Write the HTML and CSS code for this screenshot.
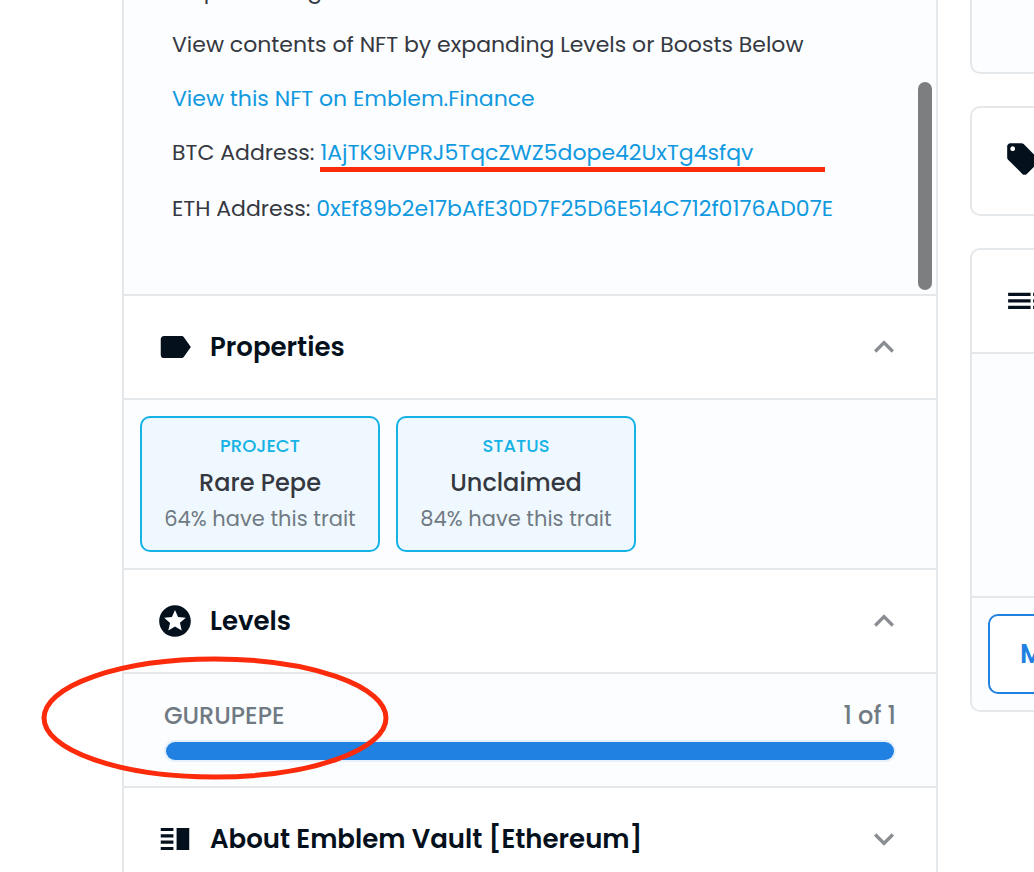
FILE: index.html
```
<!DOCTYPE html>
<html lang="en">
<head>
    <meta charset="utf-8">
    <title>GURUPEPE - Emblem Vault</title>
    <link rel="stylesheet" href="styles.css">
</head>
<body>
    <div class="layout">
        <main class="panel">
            <section class="description">
                <p>To presenting</p>
                <p>View contents of NFT by expanding Levels or Boosts Below</p>
                <p><a href="#">View this NFT on Emblem.Finance</a></p>
                <p>BTC Address: <a class="marked" href="#">1AjTK9iVPRJ5TqcZWZ5dope42UxTg4sfqv</a></p>
                <p class="eth">ETH Address: <a href="#">0xEf89b2e17bAfE30D7F25D6E514C712f0176AD07E</a></p>
                <div class="scroll-thumb"></div>
            </section>

            <section>
                <button class="panel-header" type="button" aria-expanded="true">
                    <svg class="icon" viewBox="0 0 24 24"><path d="M17.63 5.84C17.27 5.33 16.67 5 16 5L5 5.01C3.9 5.01 3 5.9 3 7v10c0 1.1.9 1.99 2 1.99L16 19c.67 0 1.27-.33 1.63-.84L22 12l-4.37-6.16z"/></svg>
                    <span class="title">Properties</span>
                    <svg class="chevron" viewBox="0 0 24 24"><path d="M12 8l-6 6 1.41 1.41L12 10.83l4.59 4.58L18 14z"/></svg>
                </button>
                <div class="panel-body traits">
                    <a class="trait" href="#">
                        <span class="trait-type">PROJECT</span>
                        <span class="trait-value">Rare Pepe</span>
                        <span class="trait-rarity">64% have this trait</span>
                    </a>
                    <a class="trait" href="#">
                        <span class="trait-type">STATUS</span>
                        <span class="trait-value">Unclaimed</span>
                        <span class="trait-rarity">84% have this trait</span>
                    </a>
                </div>
            </section>

            <section>
                <button class="panel-header" type="button" aria-expanded="true">
                    <svg class="icon" viewBox="0 0 24 24"><path d="M11.99 2C6.47 2 2 6.48 2 12s4.47 10 9.99 10C17.52 22 22 17.52 22 12S17.52 2 11.99 2zm4.24 16L12 15.45 7.77 18l1.12-4.81-3.73-3.23 4.92-.42L12 5l1.92 4.53 4.92.42-3.73 3.23L16.23 18z"/></svg>
                    <span class="title">Levels</span>
                    <svg class="chevron" viewBox="0 0 24 24"><path d="M12 8l-6 6 1.41 1.41L12 10.83l4.59 4.58L18 14z"/></svg>
                </button>
                <div class="panel-body levels">
                    <div class="level-text">
                        <span>GURUPEPE</span>
                        <span>1 of 1</span>
                    </div>
                    <div class="level-bar"><div class="level-fill"></div></div>
                    <svg class="circle-mark" viewBox="0 0 348 124"><ellipse cx="174" cy="62" rx="171" ry="59"/></svg>
                </div>
            </section>

            <section>
                <button class="panel-header" type="button" aria-expanded="false">
                    <svg class="icon" viewBox="0 0 24 24"><path d="M3 13h8v2H3zm0 4h8v2H3zm0-8h8v2H3zm0-4h8v2H3zm10 0h8v14h-8z"/></svg>
                    <span class="title">About Emblem Vault [Ethereum]</span>
                    <svg class="chevron" viewBox="0 0 24 24"><path d="M16.59 8.59L12 13.17 7.41 8.59 6 10l6 6 6-6z"/></svg>
                </button>
            </section>
        </main>

        <aside class="sidebar">
            <div class="card price"></div>
            <div class="card listings">
                <svg class="icon" viewBox="0 0 24 24"><path d="M21.41 11.58l-9-9C12.05 2.22 11.55 2 11 2H4c-1.1 0-2 .9-2 2v7c0 .55.22 1.05.59 1.42l9 9c.36.36.86.58 1.41.58.55 0 1.05-.22 1.41-.59l7-7c.37-.36.59-.86.59-1.41 0-.55-.23-1.06-.59-1.42zM5.5 7C4.67 7 4 6.33 4 5.5S4.67 4 5.5 4 7 4.67 7 5.5 6.33 7 5.5 7z"/></svg>
            </div>
            <div class="card offers">
                <div class="offers-header">
                    <svg class="icon" viewBox="0 0 24 24"><path d="M2.600 6.800h14.200v2H2.600zm0 4.100h14.200v2H2.600zm0 4.100h14.200v2H2.600zM18.400 6.800h2v2h-2zm0 4.100h2v2h-2zm0 4.100h2v2h-2z"/></svg>
                </div>
                <div class="offers-body"></div>
                <div class="offers-footer">
                    <button class="offer-button" type="button">Make Offer</button>
                </div>
            </div>
        </aside>
    </div>
</body>
</html>
```
FILE: styles.css
```
* { box-sizing: border-box; }
body { margin: 0; background: #fff; color: #353840; font-family: Poppins, Inter, sans-serif; font-size: 22px; overflow: hidden; }
a { color: #1199e0; text-decoration: none; }
button { font-family: inherit; cursor: pointer; }

.layout { display: grid; grid-template-columns: minmax(0, 1fr) 64px; gap: 32px; padding-left: 122px; align-items: start; }
.panel { border: 2px solid #e5e8eb; border-width: 0 2px; }

/* description */
.description { position: relative; height: 294px; padding: 0 48px 68px; background: #fbfdff; display: flex; flex-direction: column; justify-content: flex-end; gap: 20px; overflow: hidden; white-space: nowrap; }
.description p { margin: 0; line-height: 34px; flex: none; }
.description .eth { margin-top: 2px; }
.marked { position: relative; }
.marked::after { content: ""; position: absolute; left: 0; top: 30px; width: 505px; height: 5px; background: #fb2b0b; }
.scroll-thumb { position: absolute; right: 4px; bottom: 4px; width: 14px; height: 208px; border-radius: 7px; background: #7d7e80; }

/* accordion */
.panel-header { display: flex; align-items: center; width: 100%; height: 104px; padding: 0 32px; border: 0; border-top: 2px solid #e5e8eb; background: #fff; color: #04111d; text-align: left; }
.icon { width: 38px; height: 38px; flex: none; fill: #04111d; }
.title { flex: 1; margin-left: 16px; font-size: 26px; font-weight: 600; }
.chevron { width: 40px; height: 40px; fill: #8a8d91; }
.panel-body { border-top: 2px solid #e5e8eb; background: #fbfdff; }

.traits { display: flex; gap: 16px; padding: 16px; }
.trait { display: flex; flex-direction: column; align-items: center; width: 240px; height: 136px; padding-top: 12px; border: 2px solid #15b2e5; border-radius: 10px; background: #eff8ff; }
.trait-type { color: #15b2e5; font-size: 18px; font-weight: 500; line-height: 32px; }
.trait-value { color: #353840; font-size: 24px; font-weight: 500; line-height: 42px; }
.trait-rarity { color: #707a83; font-size: 21px; line-height: 30px; }

.levels { position: relative; height: 114px; padding: 24px 40px; }
.level-text { display: flex; justify-content: space-between; color: #707a83; font-size: 24px; font-weight: 500; line-height: 36px; }
.level-bar { height: 22px; margin-top: 6px; padding: 2px; border-radius: 11px; background: #e5f0fb; }
.level-fill { height: 18px; border-radius: 9px; background: #2081e2; }
.circle-mark { position: absolute; left: -83px; top: -18px; width: 348px; height: 124px; fill: none; stroke: #fb2b0b; stroke-width: 5; pointer-events: none; }

/* sidebar, runs off the right edge */
.sidebar { display: flex; flex-direction: column; gap: 32px; overflow: hidden; }
.card { width: 560px; border: 2px solid #e5e8eb; border-radius: 10px; background: #fff; overflow: hidden; }
.price { height: 74px; border-top: 0; border-radius: 0 0 10px 10px; background: #fbfdff; }
.listings { display: flex; align-items: center; height: 110px; padding: 0 32px 4px; }
.offers-header { display: flex; align-items: center; height: 102px; padding: 0 32px; }
.offers-body { height: 246px; border: 2px solid #e5e8eb; border-width: 2px 0; background: #fbfdff; }
.offers-footer { padding: 16px; background: #fbfdff; }
.offer-button { height: 80px; padding: 0 30px; border: 2px solid #2081e2; border-radius: 10px; background: #fff; color: #2081e2; font-size: 26px; font-weight: 600; }
```
